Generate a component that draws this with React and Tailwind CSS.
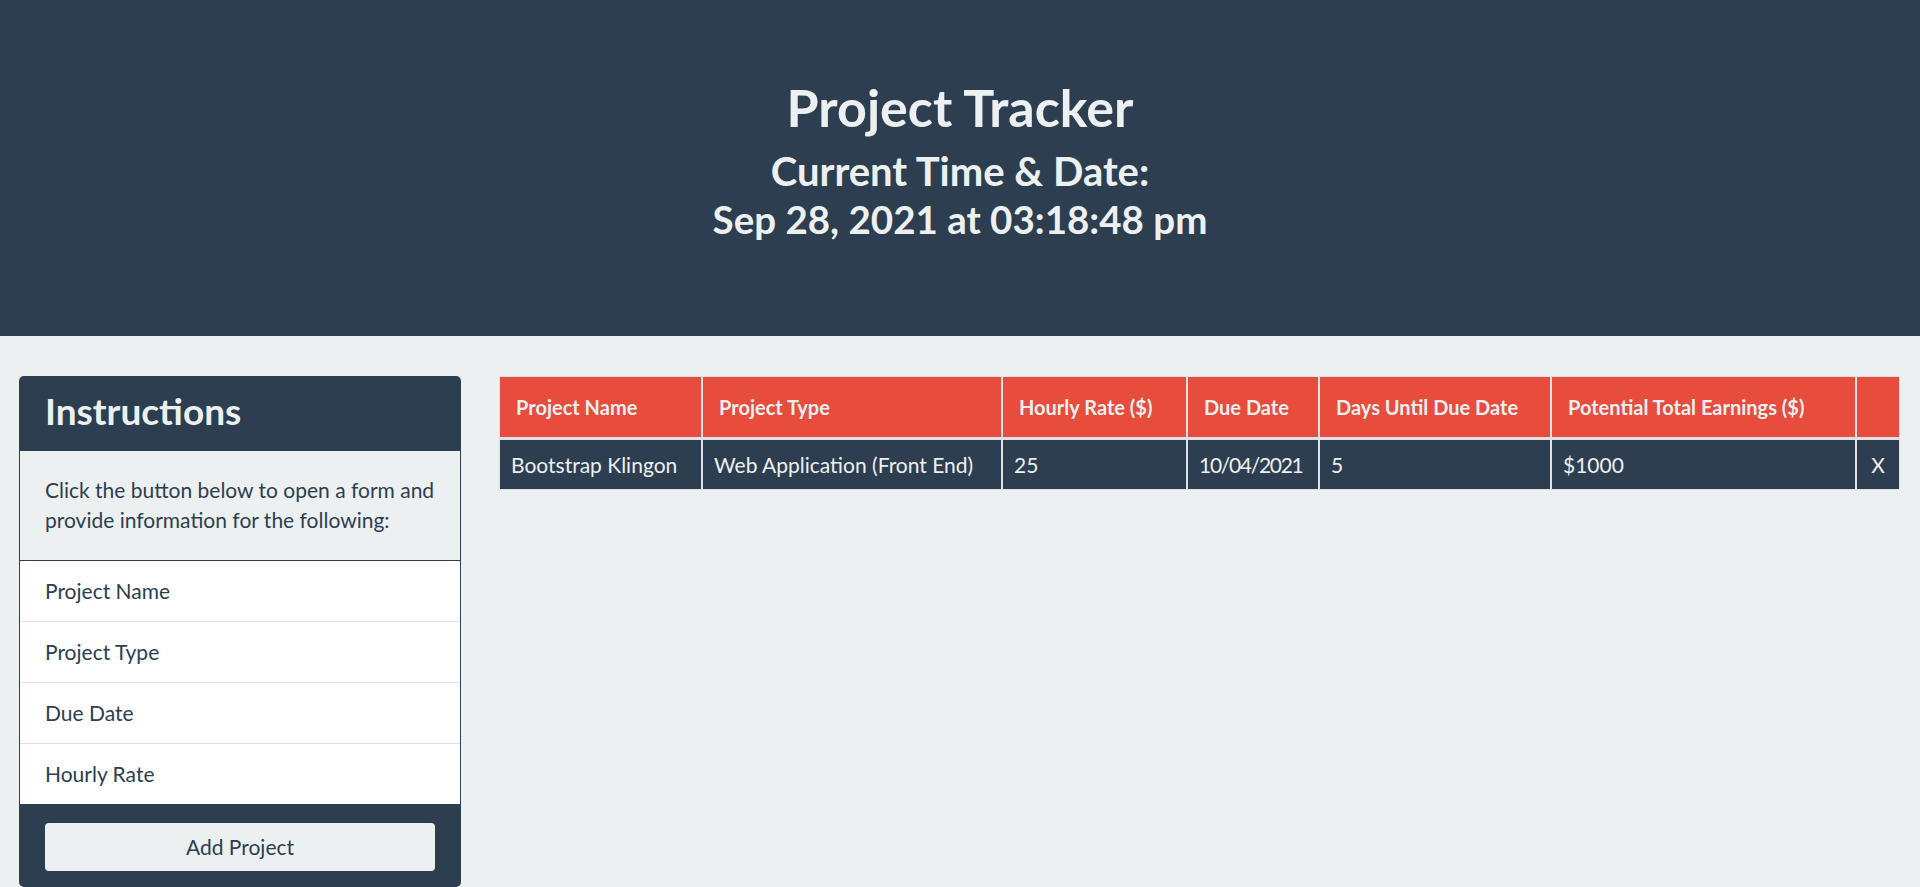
import React from "react";

const headers = [
  "Project Name",
  "Project Type",
  "Hourly Rate ($)",
  "Due Date",
  "Days Until Due Date",
  "Potential Total Earnings ($)",
  "",
];

const row = [
  { text: "Bootstrap Klingon", cls: "" },
  { text: "Web Application (Front End)", cls: "" },
  { text: "25", cls: "" },
  { text: "10/04/2021", cls: "tracking-[-1.3px]" },
  { text: "5", cls: "" },
  { text: "$1000", cls: "" },
];

const items = ["Project Name", "Project Type", "Due Date", "Hourly Rate"];

export default function App() {
  return (
    <div className="min-h-screen bg-[#ecf0f1] font-[Lato,sans-serif] text-[#2c3e50]">
      <header className="h-[336px] bg-[#2c3e50] pt-[77px] text-center text-[#ecf0f1]">
        <h1 className="text-[52px] font-bold leading-[60px]">Project Tracker</h1>
        <h2 className="mt-[10px] font-bold">
          <span className="block text-[40px] leading-[48px]">Current Time &amp; Date:</span>
          <span className="block text-[38.5px] leading-[48px]">Sep 28, 2021 at 03:18:48 pm</span>
        </h2>
      </header>

      <main className="flex items-start gap-[38px] pl-[19px] pr-[20px] pt-[40px]">
        <aside className="w-[442px] shrink-0 overflow-hidden rounded-[5px] bg-[#2c3e50]">
          <div className="h-[75px] px-[26px] pt-[10px]">
            <h2 className="text-[37px] font-bold leading-[50px] text-[#ecf0f1]">Instructions</h2>
          </div>
          <div className="mx-px border-b border-[#2c3e50] bg-[#ecf0f1] pb-[25px] pl-[25px] pr-[14px] pt-[24px] text-[21px] leading-[30px]">
            Click the button below to open a form and provide information for the following:
          </div>
          <ul className="mx-px bg-white">
            {items.map((it, i) => (
              <li
                key={it}
                className={
                  "h-[61px] border-b pl-[25px] pt-[15px] text-[21px] leading-[30px] " +
                  (i === items.length - 1 ? "border-[#2c3e50]" : "border-[#dfe3e5]")
                }
              >
                {it}
              </li>
            ))}
          </ul>
          <div className="px-[26px] pb-[16px] pt-[18px]">
            <button className="h-[48px] w-full rounded-[4px] bg-[#ecf0f1] text-[21px] leading-[48px] text-[#2c3e50]">
              Add Project
            </button>
          </div>
        </aside>

        <section className="min-w-0 flex-1">
          <div className="border border-[#dee2e6] bg-[#dee2e6]">
            <div className="grid grid-cols-[201px_298px_183px_130px_230px_303px_1fr] gap-x-[2px] gap-y-[3px]">
              {headers.map((h, i) => (
                <div
                  key={"h" + i}
                  className="flex h-[60px] items-center bg-[#e74c3c] pl-[16px] text-[20px] font-bold text-[#ecf0f1]"
                >
                  {h}
                </div>
              ))}
              {row.map((c, i) => (
                <div
                  key={"c" + i}
                  className={
                    "flex h-[49px] items-center bg-[#2c3e50] pl-[11px] text-[21px] text-[#ecf0f1] " + c.cls
                  }
                >
                  {c.text}
                </div>
              ))}
              <div className="flex h-[49px] items-center justify-center bg-[#2c3e50] text-[21px] text-[#ecf0f1]">
                X
              </div>
            </div>
          </div>
        </section>
      </main>
    </div>
  );
}
